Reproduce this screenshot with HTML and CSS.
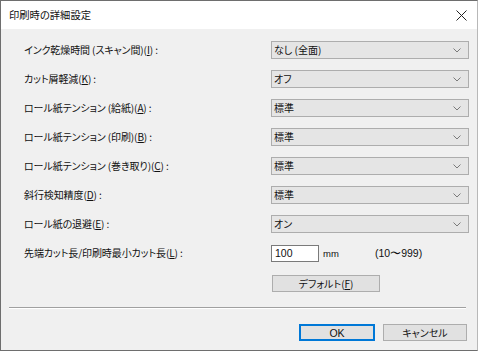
FILE: index.html
```html
<!DOCTYPE html>
<html lang="ja">
<head>
<meta charset="utf-8">
<link rel="stylesheet" href="styles.css">
</head>
<body>
<div class="window">
  <div class="titlebar">
    <span class="title">印刷時の詳細設定</span>
    <svg class="close" width="11" height="11" viewBox="0 0 11 11"><path d="M0.5 0.5 L10.5 10.5 M10.5 0.5 L0.5 10.5" stroke="#222" stroke-width="1"/></svg>
  </div>
  <div class="content">
    <div class="form">
      <label class="lbl">インク乾燥時間 (スキャン間)(<u>I</u>) :</label>
      <div class="select"><span>なし (全面)</span><svg class="chev" width="8" height="5" viewBox="0 0 8 5"><path d="M0.5 0.5 L4 4 L7.5 0.5" fill="none" stroke="#7a7a7a" stroke-width="1"/></svg></div>

      <label class="lbl">カット屑軽減(<u>K</u>) :</label>
      <div class="select"><span>オフ</span><svg class="chev" width="8" height="5" viewBox="0 0 8 5"><path d="M0.5 0.5 L4 4 L7.5 0.5" fill="none" stroke="#7a7a7a" stroke-width="1"/></svg></div>

      <label class="lbl">ロール紙テンション (給紙)(<u>A</u>) :</label>
      <div class="select"><span>標準</span><svg class="chev" width="8" height="5" viewBox="0 0 8 5"><path d="M0.5 0.5 L4 4 L7.5 0.5" fill="none" stroke="#7a7a7a" stroke-width="1"/></svg></div>

      <label class="lbl">ロール紙テンション (印刷)(<u>B</u>) :</label>
      <div class="select"><span>標準</span><svg class="chev" width="8" height="5" viewBox="0 0 8 5"><path d="M0.5 0.5 L4 4 L7.5 0.5" fill="none" stroke="#7a7a7a" stroke-width="1"/></svg></div>

      <label class="lbl">ロール紙テンション (巻き取り)(<u>C</u>) :</label>
      <div class="select"><span>標準</span><svg class="chev" width="8" height="5" viewBox="0 0 8 5"><path d="M0.5 0.5 L4 4 L7.5 0.5" fill="none" stroke="#7a7a7a" stroke-width="1"/></svg></div>

      <label class="lbl">斜行検知精度(<u>D</u>) :</label>
      <div class="select"><span>標準</span><svg class="chev" width="8" height="5" viewBox="0 0 8 5"><path d="M0.5 0.5 L4 4 L7.5 0.5" fill="none" stroke="#7a7a7a" stroke-width="1"/></svg></div>

      <label class="lbl">ロール紙の退避(<u>E</u>) :</label>
      <div class="select"><span>オン</span><svg class="chev" width="8" height="5" viewBox="0 0 8 5"><path d="M0.5 0.5 L4 4 L7.5 0.5" fill="none" stroke="#7a7a7a" stroke-width="1"/></svg></div>

      <label class="lbl">先端カット長/印刷時最小カット長(<u>L</u>) :</label>
      <div class="inputrow">
        <div class="textbox">100</div>
        <span class="unit">mm</span>
        <span class="range">(10〜999)</span>
      </div>
    </div>
    <div class="defrow">
      <div class="btn defbtn">デフォルト(<u>F</u>)</div>
    </div>
  </div>
  <div class="sep"></div>
  <div class="footer">
    <div class="btn ok">OK</div>
    <div class="btn cancel">キャンセル</div>
  </div>
</div>
</body>
</html>
```

FILE: styles.css
```css
html, body {
  margin: 0;
  padding: 0;
  background: #ffffff;
}
body {
  font-family: "Noto Sans CJK JP", "Noto Sans", sans-serif;
  font-size: 10px;
  color: #111;
  font-feature-settings: "palt";
}
.window {
  width: 478px;
  height: 351px;
  box-sizing: border-box;
  border: 1px solid #6e6e6e;
  border-right-color: #b8b8b8;
  background: #f0f0f0;
  display: flex;
  flex-direction: column;
}
.titlebar {
  height: 28px;
  background: #fff;
  display: flex;
  align-items: center;
  justify-content: space-between;
  padding: 0 10px 0 8px;
  flex: none;
}
.title {
  font-size: 10.3px;
  line-height: 14px;
  color: #111;
}
.close {
  display: block;
}
.content {
  padding: 12px 0 0 23px;
}
.form {
  display: grid;
  grid-template-columns: 247px 198px;
  grid-auto-rows: 18px;
  row-gap: 11px;
  align-items: center;
}
.lbl {
  line-height: 14px;
  white-space: nowrap;
  letter-spacing: -0.1px;
}
u {
  text-decoration: underline;
  text-underline-offset: 1px;
}
.select {
  height: 18px;
  box-sizing: border-box;
  border: 1px solid #adadad;
  background: #e5e5e5;
  display: flex;
  align-items: center;
  justify-content: space-between;
  padding: 0 7px 0 2px;
  line-height: 14px;
}
.chev {
  display: block;
}
.inputrow {
  display: flex;
  align-items: center;
  height: 18px;
}
.textbox {
  width: 48px;
  height: 17px;
  box-sizing: border-box;
  border: 1px solid #7a7a7a;
  background: #fff;
  padding: 0 0 0 3px;
  line-height: 14px;
  font-family: "Liberation Sans", "Noto Sans", sans-serif;
  font-size: 10.5px;
}
.unit {
  margin-left: 4px;
  width: 52px;
  line-height: 14px;
  font-family: "Liberation Sans", sans-serif;
  font-size: 9.5px;
  padding-top: 2px;
}
.range {
  line-height: 14px;
  font-family: "Liberation Sans", sans-serif;
  font-size: 10.5px;
}
.defrow {
  padding-left: 248px;
  margin-top: 13px;
}
.btn {
  height: 17px;
  box-sizing: border-box;
  border: 1px solid #adadad;
  background: #e1e1e1;
  display: flex;
  align-items: center;
  justify-content: center;
  line-height: 14px;
}
.defbtn {
  width: 108px;
}
.sep {
  margin: 15px 11px 0 8px;
  height: 1px;
  background: #a0a0a0;
  border-bottom: 1px solid #fff;
}
.footer {
  display: flex;
  justify-content: flex-end;
  gap: 8px;
  padding: 15px 10px 0 0;
}
.ok {
  width: 76px;
  border: 2px solid #0078d7;
  font-family: "Liberation Sans", sans-serif;
  font-size: 10.5px;
}
.cancel {
  width: 84px;
}
```
